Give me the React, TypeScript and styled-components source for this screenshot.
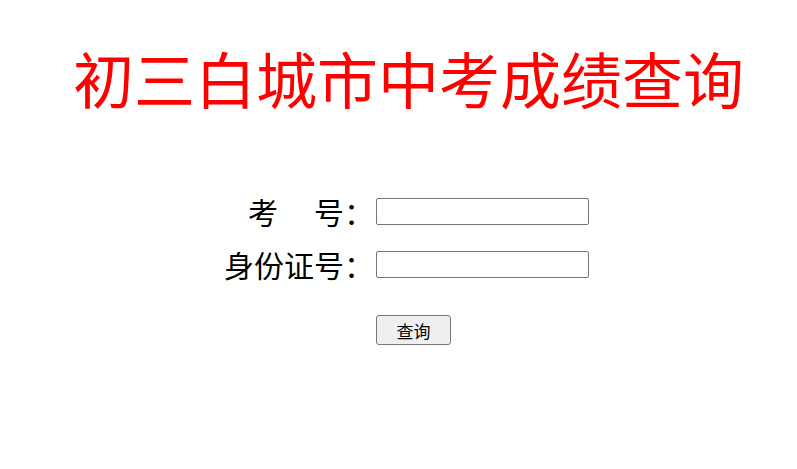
import styled, { createGlobalStyle } from 'styled-components'

const GlobalStyle = createGlobalStyle`
  html, body {
    margin: 0;
    padding: 0;
    background: #ffffff;
  }
  body {
    font-family: "Noto Sans CJK SC", "Microsoft YaHei", sans-serif;
  }
`

const Page = styled.div`
  width: 797px;
  padding: 38px 0 0 20px;
  box-sizing: border-box;
  display: flex;
  flex-direction: column;
  align-items: center;
`

const Title = styled.h1`
  margin: 0;
  font-size: 61px;
  line-height: 80px;
  font-weight: normal;
  color: #ff0000;
  white-space: nowrap;
`

const Form = styled.form`
  margin: 73px 4px 0 0;
  display: grid;
  grid-template-columns: auto 213px;
  grid-template-rows: 40px 40px auto;
  column-gap: 2px;
  row-gap: 13px;
  align-items: center;
`

const Label = styled.label`
  font-size: 30px;
  line-height: 40px;
  color: #000;
  text-align: right;
  white-space: nowrap;
`

const Gap = styled.span<{ $w: number }>`
  display: inline-block;
  width: ${p => p.$w}px;
`

const Field = styled.input`
  width: 213px;
  height: 27px;
  box-sizing: border-box;
  border: 1px solid #767676;
  border-radius: 2px;
  padding: 1px 2px;
  margin: 0;
  font-size: 13px;
  background: #fff;
`

const ButtonCell = styled.div`
  grid-column: 2;
  padding-top: 18px;
  display: flex;
  align-items: flex-start;
`

const Submit = styled.button`
  width: 75px;
  height: 30px;
  box-sizing: border-box;
  border: 1px solid #767676;
  border-radius: 3px;
  background: #efefef;
  font-family: "Noto Sans CJK SC", "Microsoft YaHei", sans-serif;
  font-size: 17px;
  line-height: 1;
  color: #000;
  padding: 0;
  margin: 0;
`

function App() {
  return (
    <>
      <GlobalStyle />
      <Page>
        <Title>初三白城市中考成绩查询</Title>
        <Form onSubmit={e => e.preventDefault()}>
          <Label htmlFor="kh">
            考<Gap $w={36} />号：
          </Label>
          <Field id="kh" type="text" />
          <Label htmlFor="sfz">身份证号：</Label>
          <Field id="sfz" type="text" />
          <ButtonCell>
            <Submit type="submit">查询</Submit>
          </ButtonCell>
        </Form>
      </Page>
    </>
  )
}

export default App
